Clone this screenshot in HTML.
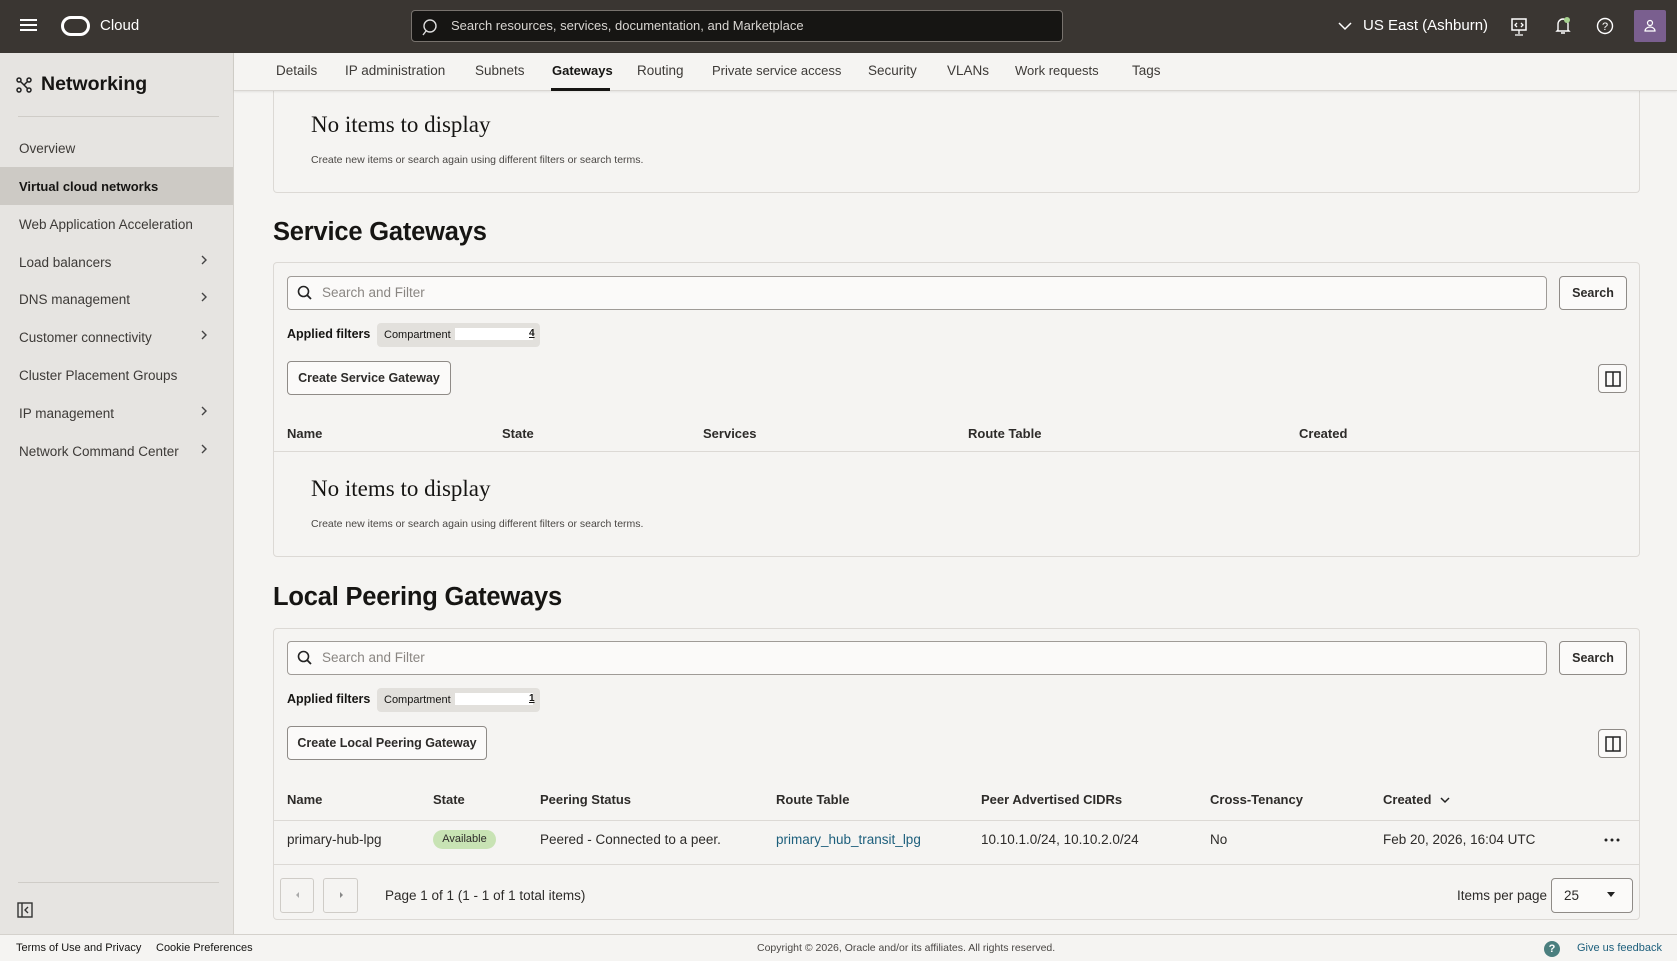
<!DOCTYPE html>
<html><head><meta charset="utf-8"><style>
*{box-sizing:border-box;margin:0;padding:0}
body{width:1677px;height:961px;overflow:hidden;background:#f5f4f2;font-family:"Liberation Sans",sans-serif;color:#161513;font-size:14px;position:relative}
.a{position:absolute;white-space:nowrap}
.top{left:0;top:0;width:1677px;height:53px;background:#3a3632}
.side{left:0;top:53px;width:234px;height:881px;background:#e6e4e1;border-right:1px solid #d4d1cc}
.tabs{left:234px;top:53px;width:1443px;height:38px;background:#f5f4f2;border-bottom:1px solid #d9d6d2;box-shadow:0 1px 2px rgba(0,0,0,.08)}
.si{left:19px;font-size:13.5px;color:#3d3a37}
.tab{top:63px;font-size:13.5px;color:#3d3a37}
.card{left:273px;width:1367px;border:1px solid #dcd9d5;border-radius:4px;background:#f5f4f2}
.h2{left:273px;font-size:25.5px;font-weight:bold;color:#161513;letter-spacing:-0.2px}
.search{left:287px;width:1260px;height:34px;border:1px solid #9f9b97;border-radius:4px;background:#fbfaf9}
.btn{border:1px solid #8f8b87;border-radius:4px;background:#fbfaf9;font-size:12.5px;font-weight:bold;display:flex;align-items:center;justify-content:center;color:#2d2b29}
.chip{left:377px;width:163px;height:24px;background:#e2e0dc;border-radius:4px;font-size:11px;padding:6px 0 0 7px}
.chip span{position:absolute;left:78px;top:5px;width:78px;height:12px;background:#fff}
.chip b{position:absolute;left:152px;top:5px;font-size:10px;text-decoration:underline}
.th{font-size:13px;font-weight:bold;color:#2d2b29}
.hr{height:1px;background:#dcd9d5}
.noit{left:311px;font-family:"Liberation Serif",serif;font-size:23px;color:#161513}
.sub{left:311px;font-size:10.5px;color:#4a4744}
.td{font-size:13.5px;color:#2d2b29}
</style></head><body>
<div class="a top"></div>
<div class="a" style="left:20px;top:19px;width:17px;height:2px;background:#fff;box-shadow:0 5px 0 #fff,0 10px 0 #fff"></div>
<div class="a" style="left:61px;top:16px;width:29px;height:20px;border:3px solid #fff;border-radius:10px"></div>
<div class="a" style="left:100px;top:17px;color:#fff;font-size:15px">Cloud</div>
<div class="a" style="left:411px;top:10px;width:652px;height:32px;background:#161513;border:1px solid #77726d;border-radius:4px"></div>
<svg class="a" style="left:421px;top:18px" width="18" height="18" viewBox="0 0 18 18"><circle cx="9" cy="8" r="6" fill="none" stroke="#ddd" stroke-width="1.4"/><path d="M5 13l-3 4" stroke="#ddd" stroke-width="1.4"/></svg>
<div class="a" style="left:451px;top:18px;color:#d8d5d1;font-size:13px">Search resources, services, documentation, and Marketplace</div>
<svg class="a" style="left:1338px;top:21px" width="14" height="10"><path d="M1 2l6 6 6-6" fill="none" stroke="#fff" stroke-width="1.5"/></svg>
<div class="a" style="left:1363px;top:17px;color:#fff;font-size:15px">US East (Ashburn)</div>
<svg class="a" style="left:1510px;top:17px" width="18" height="20"><rect x="2" y="2" width="14" height="11" fill="none" stroke="#fff" stroke-width="1.5"/><path d="M9 13v4M5 18h8M7 6l-2 2 2 2M11 6l2 2-2 2" fill="none" stroke="#fff" stroke-width="1.3"/></svg>
<svg class="a" style="left:1554px;top:16px" width="18" height="20"><path d="M4 14V8a5 5 0 0110 0v6l1 1H3z M7 17h4" fill="none" stroke="#fff" stroke-width="1.4"/><circle cx="13" cy="4" r="3" fill="#a6d28f"/></svg>
<svg class="a" style="left:1596px;top:17px" width="18" height="18"><circle cx="9" cy="9" r="7.5" fill="none" stroke="#fff" stroke-width="1.4"/><text x="9" y="13" font-size="11" fill="#fff" text-anchor="middle" font-family="Liberation Sans">?</text></svg>
<div class="a" style="left:1634px;top:10px;width:32px;height:32px;background:#7a5f8f;border-radius:2px"></div>
<svg class="a" style="left:1642px;top:18px" width="16" height="16"><circle cx="8" cy="5" r="2.5" fill="none" stroke="#fff" stroke-width="1.2"/><path d="M3 13a5 4 0 0110 0z" fill="none" stroke="#fff" stroke-width="1.2"/></svg>

<div class="a side"></div>
<svg class="a" style="left:15px;top:76px" width="18" height="18"><circle cx="4" cy="4" r="2" fill="none" stroke="#222" stroke-width="1.5"/><circle cx="14" cy="4" r="2" fill="none" stroke="#222" stroke-width="1.5"/><circle cx="4" cy="14" r="2" fill="none" stroke="#222" stroke-width="1.5"/><circle cx="14" cy="14" r="2" fill="none" stroke="#222" stroke-width="1.5"/><path d="M5.5 5.5l7 7M12.5 5.5l-3 3" stroke="#222" stroke-width="1.5"/></svg>
<div class="a" style="left:41px;top:73px;font-size:19.5px;font-weight:bold">Networking</div>
<div class="a" style="left:18px;top:116px;width:201px;height:1px;background:#cfccc7"></div>
<div class="a" style="left:0;top:167px;width:233px;height:38px;background:#cdcac5"></div>
<div class="a si" style="top:141px">Overview</div>
<div class="a si" style="top:179px;color:#161513;font-weight:bold;font-size:13px">Virtual cloud networks</div>
<div class="a si" style="top:217px">Web Application Acceleration</div>
<div class="a si" style="top:255px">Load balancers</div>
<div class="a si" style="top:292px">DNS management</div>
<div class="a si" style="top:330px">Customer connectivity</div>
<div class="a si" style="top:368px">Cluster Placement Groups</div>
<div class="a si" style="top:406px">IP management</div>
<div class="a si" style="top:444px">Network Command Center</div>
<svg class="a" style="left:200px;top:0" width="12" height="470"><g fill="none" stroke="#444" stroke-width="1.4"><path d="M2 256l4 4-4 4"/><path d="M2 293l4 4-4 4"/><path d="M2 331l4 4-4 4"/><path d="M2 407l4 4-4 4"/><path d="M2 445l4 4-4 4"/></g></svg>
<div class="a" style="left:18px;top:882px;width:201px;height:1px;background:#cfccc7"></div>
<svg class="a" style="left:17px;top:902px" width="16" height="16"><rect x="1" y="1" width="14" height="14" fill="none" stroke="#333" stroke-width="1.4"/><path d="M5 1v14M11 5l-3 3 3 3" fill="none" stroke="#333" stroke-width="1.4"/></svg>

<div class="a card" style="top:80px;height:113px;border-top:none;border-radius:0 0 4px 4px"></div>
<div class="a tabs"></div>
<div class="a tab" style="left:276px">Details</div>
<div class="a tab" style="left:345px">IP administration</div>
<div class="a tab" style="left:475px">Subnets</div>
<div class="a tab" style="left:552px;color:#161513;font-weight:bold;font-size:13px">Gateways</div>
<div class="a" style="left:551px;top:88px;width:59px;height:3px;background:#161513"></div>
<div class="a tab" style="left:637px">Routing</div>
<div class="a tab" style="left:712px;font-size:13px">Private service access</div>
<div class="a tab" style="left:868px">Security</div>
<div class="a tab" style="left:947px">VLANs</div>
<div class="a tab" style="left:1015px;font-size:13px">Work requests</div>
<div class="a tab" style="left:1132px">Tags</div>
<div class="a noit" style="top:112px">No items to display</div>
<div class="a sub" style="top:154px">Create new items or search again using different filters or search terms.</div>

<div class="a h2" style="top:218px">Service Gateways</div>
<div class="a card" style="top:262px;height:295px"></div>
<div class="a search" style="top:276px"></div>
<svg class="a" style="left:297px;top:285px" width="16" height="16"><circle cx="6.5" cy="6.5" r="5" fill="none" stroke="#222" stroke-width="1.6"/><path d="M10 10l4 4" stroke="#222" stroke-width="1.8"/></svg>
<div class="a" style="left:322px;top:285px;font-size:13.5px;color:#8a8682">Search and Filter</div>
<div class="a btn" style="left:1559px;top:276px;width:68px;height:34px">Search</div>
<div class="a" style="left:287px;top:327px;font-size:12.5px;font-weight:bold">Applied filters</div>
<div class="a chip" style="top:323px">Compartment<span></span><b>4</b></div>
<div class="a btn" style="left:287px;top:361px;width:164px;height:34px">Create Service Gateway</div>
<div class="a" style="left:1598px;top:364px;width:29px;height:29px;border:1px solid #8f8b87;border-radius:4px;background:#fbfaf9"></div>
<svg class="a" style="left:1605px;top:371px" width="16" height="16"><rect x="1" y="1" width="14" height="14" fill="none" stroke="#222" stroke-width="1.5"/><path d="M8 1v14" stroke="#222" stroke-width="1.5"/></svg>
<div class="a th" style="left:287px;top:426px">Name</div>
<div class="a th" style="left:502px;top:426px">State</div>
<div class="a th" style="left:703px;top:426px">Services</div>
<div class="a th" style="left:968px;top:426px">Route Table</div>
<div class="a th" style="left:1299px;top:426px">Created</div>
<div class="a hr" style="left:274px;top:451px;width:1365px"></div>
<div class="a noit" style="top:476px">No items to display</div>
<div class="a sub" style="top:518px">Create new items or search again using different filters or search terms.</div>

<div class="a h2" style="top:583px">Local Peering Gateways</div>
<div class="a card" style="top:628px;height:292px"></div>
<div class="a search" style="top:641px"></div>
<svg class="a" style="left:297px;top:650px" width="16" height="16"><circle cx="6.5" cy="6.5" r="5" fill="none" stroke="#222" stroke-width="1.6"/><path d="M10 10l4 4" stroke="#222" stroke-width="1.8"/></svg>
<div class="a" style="left:322px;top:650px;font-size:13.5px;color:#8a8682">Search and Filter</div>
<div class="a btn" style="left:1559px;top:641px;width:68px;height:34px">Search</div>
<div class="a" style="left:287px;top:692px;font-size:12.5px;font-weight:bold">Applied filters</div>
<div class="a chip" style="top:688px">Compartment<span></span><b>1</b></div>
<div class="a btn" style="left:287px;top:726px;width:200px;height:34px">Create Local Peering Gateway</div>
<div class="a" style="left:1598px;top:729px;width:29px;height:29px;border:1px solid #8f8b87;border-radius:4px;background:#fbfaf9"></div>
<svg class="a" style="left:1605px;top:736px" width="16" height="16"><rect x="1" y="1" width="14" height="14" fill="none" stroke="#222" stroke-width="1.5"/><path d="M8 1v14" stroke="#222" stroke-width="1.5"/></svg>
<div class="a th" style="left:287px;top:792px">Name</div>
<div class="a th" style="left:433px;top:792px">State</div>
<div class="a th" style="left:540px;top:792px">Peering Status</div>
<div class="a th" style="left:776px;top:792px">Route Table</div>
<div class="a th" style="left:981px;top:792px">Peer Advertised CIDRs</div>
<div class="a th" style="left:1210px;top:792px">Cross-Tenancy</div>
<div class="a th" style="left:1383px;top:792px">Created</div>
<svg class="a" style="left:1440px;top:796px" width="10" height="8"><path d="M1 2l4 4 4-4" fill="none" stroke="#222" stroke-width="1.5"/></svg>
<div class="a hr" style="left:274px;top:820px;width:1365px"></div>
<div class="a td" style="left:287px;top:832px">primary-hub-lpg</div>
<div class="a" style="left:433px;top:830px;width:63px;height:19px;background:#c8e3b4;border-radius:10px;font-size:11px;text-align:center;line-height:19px;color:#2d2b29">Available</div>
<div class="a td" style="left:540px;top:832px">Peered - Connected to a peer.</div>
<div class="a td" style="left:776px;top:832px;color:#1d5f7c">primary_hub_transit_lpg</div>
<div class="a td" style="left:981px;top:832px">10.10.1.0/24, 10.10.2.0/24</div>
<div class="a td" style="left:1210px;top:832px">No</div>
<div class="a td" style="left:1383px;top:832px">Feb 20, 2026, 16:04 UTC</div>
<svg class="a" style="left:1604px;top:837px" width="16" height="6"><circle cx="2" cy="3" r="1.5" fill="#222"/><circle cx="8" cy="3" r="1.5" fill="#222"/><circle cx="14" cy="3" r="1.5" fill="#222"/></svg>
<div class="a hr" style="left:274px;top:864px;width:1365px"></div>
<div class="a" style="left:280px;top:878px;width:34px;height:35px;border:1px solid #cfccc7;border-radius:3px"></div>
<div class="a" style="left:323px;top:878px;width:35px;height:35px;border:1px solid #cfccc7;border-radius:3px"></div>
<svg class="a" style="left:293px;top:890px" width="10" height="10"><path d="M6 2L3 5l3 3z" fill="#aaa"/></svg>
<svg class="a" style="left:336px;top:890px" width="10" height="10"><path d="M4 2l3 3-3 3z" fill="#888"/></svg>
<div class="a td" style="left:385px;top:888px">Page 1 of 1 (1 - 1 of 1 total items)</div>
<div class="a td" style="left:1457px;top:888px">Items per page</div>
<div class="a" style="left:1551px;top:878px;width:82px;height:35px;border:1px solid #8f8b87;border-radius:4px;background:#fbfaf9"></div>
<div class="a td" style="left:1564px;top:888px">25</div>
<svg class="a" style="left:1606px;top:891px" width="10" height="8"><path d="M1 1h8L5 6z" fill="#222"/></svg>

<div class="a" style="left:0;top:934px;width:1677px;height:1px;background:#d4d1cc"></div>
<div class="a" style="left:16px;top:942px;font-size:11px">Terms of Use and Privacy</div>
<div class="a" style="left:156px;top:942px;font-size:11px">Cookie Preferences</div>
<div class="a" style="left:757px;top:942px;font-size:10.5px;color:#4a4744">Copyright © 2026, Oracle and/or its affiliates. All rights reserved.</div>
<div class="a" style="left:1544px;top:941px;width:16px;height:16px;border-radius:50%;background:#4b7f7f;color:#fff;font-size:11px;font-weight:bold;text-align:center;line-height:16px">?</div>
<div class="a" style="left:1577px;top:942px;font-size:11px;color:#1d5f7c">Give us feedback</div>
</body></html>
